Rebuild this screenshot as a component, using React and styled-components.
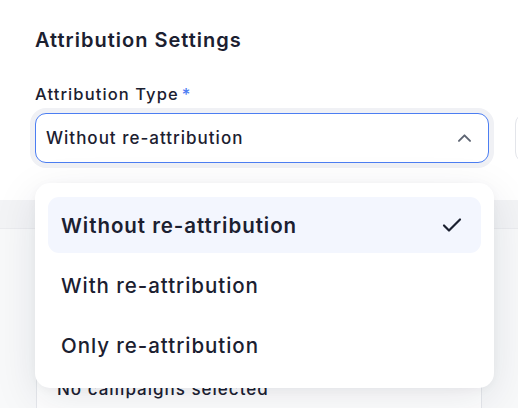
import styled, { createGlobalStyle } from "styled-components"

const GlobalStyle = createGlobalStyle`
    html, body {
        margin: 0;
        background: #ffffff;
        overflow: hidden;
    }
    body {
        font-family: Inter, "Noto Sans", sans-serif;
        color: #1b2030;
    }
`

const Page = styled.div`
    width: 518px;
    height: 408px;
    overflow: hidden;
`

const SettingsSection = styled.div`
    padding: 28px 35px 37px 35px;
    background: #ffffff;
`

const Heading = styled.h2`
    margin: 0 0 32px 0;
    font-size: 20px;
    font-weight: 600;
    line-height: 24px;
    letter-spacing: 1px;
`

const FieldRow = styled.div`
    display: flex;
    gap: 26px;
    width: 520px;
`

const Field = styled.div`
    display: flex;
    flex-direction: column;
    gap: 9px;
    flex: 0 0 ${(props) => props.$width}px;
`

const Label = styled.label`
    font-size: 16.5px;
    font-weight: 500;
    line-height: 20px;
    height: 20px;
    letter-spacing: 1.1px;
`

const Required = styled.span`
    color: #4b7cf3;
    margin-left: 3px;
`

const SelectWrap = styled.div`
    position: relative;
`

const SelectBox = styled.div`
    height: 50px;
    box-sizing: border-box;
    border: 1px solid ${(props) => (props.$open ? "#4c7ef2" : "#e3e5ea")};
    border-radius: 11px;
    box-shadow: ${(props) => (props.$open ? "0 0 0 5px #f0f1f5" : "none")};
    display: flex;
    align-items: center;
    justify-content: space-between;
    padding: 0 14px 0 10px;
    font-size: 17px;
    font-weight: 500;
    letter-spacing: 1px;
    background: #ffffff;
`

const Chevron = styled.svg`
    width: 19px;
    height: 19px;
    color: #5d6472;
`

const Lower = styled.div`
    height: 208px;
    background: #f8f9fa;
`

const TabStrip = styled.div`
    height: 28px;
    background: #f3f4f6;
    border-bottom: 1px solid #ebecef;
`

const Card = styled.div`
    margin: 0 36px 0 36px;
    height: 180px;
    box-sizing: border-box;
    border: 1px solid #e6e8ec;
    border-bottom: none;
    background: #ffffff;
    padding: 149px 0 0 0;
`

const CampaignInput = styled.div`
    padding: 0 20px;
    font-size: 17px;
    font-weight: 500;
    letter-spacing: 1px;
`

const Menu = styled.div`
    position: absolute;
    top: 70px;
    left: 0;
    width: 459px;
    box-sizing: border-box;
    padding: 14px 13px 15px 13px;
    background: #ffffff;
    border-radius: 15px;
    box-shadow: 0 12px 44px rgba(20, 30, 60, 0.10), 0 2px 10px rgba(20, 30, 60, 0.04);
    display: flex;
    flex-direction: column;
    gap: 4px;
    z-index: 5;
`

const Option = styled.div`
    height: 56px;
    border-radius: 11px;
    display: flex;
    align-items: center;
    justify-content: space-between;
    padding: 0 17px 0 13px;
    font-size: 20.5px;
    font-weight: ${(props) => (props.$selected ? 600 : 450)};
    letter-spacing: 0.95px;
    background: ${(props) => (props.$selected ? "#f3f6fe" : "transparent")};
`

const Check = styled.svg`
    width: 24px;
    height: 24px;
    color: #1b2030;
`

const options = ["Without re-attribution", "With re-attribution", "Only re-attribution"]

export default function App() {
    const selected = options[0]
    return (
        <Page>
            <GlobalStyle />
            <SettingsSection>
                <Heading>Attribution Settings</Heading>
                <FieldRow>
                    <Field $width={454}>
                        <Label>
                            Attribution Type<Required>*</Required>
                        </Label>
                        <SelectWrap>
                            <SelectBox $open>
                                {selected}
                                <Chevron viewBox="0 0 24 24" fill="none" stroke="currentColor" strokeWidth="2.4" strokeLinecap="round" strokeLinejoin="round">
                                    <path d="M5 15l7-7 7 7" />
                                </Chevron>
                            </SelectBox>
                            <Menu>
                                {options.map((o) => (
                                    <Option key={o} $selected={o === selected}>
                                        {o}
                                        {o === selected && (
                                            <Check viewBox="0 0 24 24" fill="none" stroke="currentColor" strokeWidth="2.2" strokeLinecap="round" strokeLinejoin="round">
                                                <path d="M4 12.5l5 5L20 6.5" />
                                            </Check>
                                        )}
                                    </Option>
                                ))}
                            </Menu>
                        </SelectWrap>
                    </Field>
                    <Field $width={200}>
                        <Label />
                        <SelectBox />
                    </Field>
                </FieldRow>
            </SettingsSection>
            <Lower>
                <TabStrip />
                <Card>
                    <CampaignInput>No campaigns selected</CampaignInput>
                </Card>
            </Lower>
        </Page>
    )
}
